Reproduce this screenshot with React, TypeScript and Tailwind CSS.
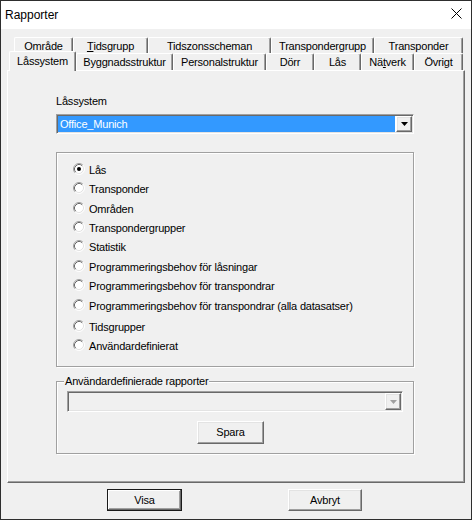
import React from "react";

const raised =
  "border border-t-white border-l-white border-r-[#696969] border-b-[#696969] shadow-[inset_-1px_-1px_0_#a0a0a0,inset_1px_1px_0_#e3e3e3] bg-[#f0f0f0]";
const sunken =
  "border border-t-[#a0a0a0] border-l-[#a0a0a0] border-r-white border-b-white shadow-[inset_1px_1px_0_#696969,inset_-1px_-1px_0_#e3e3e3] p-[1px]";

function Radio({ checked }: { checked?: boolean }) {
  return (
    <svg width="12" height="12" viewBox="0 0 12 12" className="shrink-0 mt-[3px]">
      <circle cx="6" cy="6" r="5" fill="#ffffff" />
      <path d="M2.11 9.89 A5.5 5.5 0 0 1 9.89 2.11" stroke="#a0a0a0" fill="none" />
      <path d="M2.82 9.18 A4.5 4.5 0 0 1 9.18 2.82" stroke="#696969" fill="none" />
      <path d="M9.89 2.11 A5.5 5.5 0 0 1 2.11 9.89" stroke="#ffffff" fill="none" />
      <path d="M9.18 2.82 A4.5 4.5 0 0 1 2.82 9.18" stroke="#e3e3e3" fill="none" />
      {checked && <circle cx="6" cy="6" r="2" fill="#000000" />}
    </svg>
  );
}

function Arrow({ color }: { color: string }) {
  return (
    <svg width="7" height="4" viewBox="0 0 7 4">
      <polygon points="0,0 7,0 3.5,4" fill={color} />
    </svg>
  );
}

type Tab = { label: React.ReactNode; w: number; selected?: boolean };

const row1: Tab[] = [
  { label: "Område", w: 59 },
  {
    label: (
      <>
        <span className="underline underline-offset-1">T</span>idsgrupp
      </>
    ),
    w: 75,
  },
  { label: "Tidszonsscheman", w: 123 },
  { label: "Transpondergrupp", w: 103 },
  { label: "Transponder", w: 89 },
];

const row2: Tab[] = [
  { label: "Låssystem", w: 67, selected: true },
  { label: "Byggnadsstruktur", w: 97 },
  { label: "Personalstruktur", w: 93 },
  { label: "Dörr", w: 48 },
  { label: "Lås", w: 47 },
  {
    label: (
      <>
        Nä<span className="underline underline-offset-1">t</span>verk
      </>
    ),
    w: 53,
  },
  { label: "Övrigt", w: 49 },
];

const radios: { label: string; h: number; checked?: boolean }[] = [
  { label: "Lås", h: 19, checked: true },
  { label: "Transponder", h: 20 },
  { label: "Områden", h: 19 },
  { label: "Transpondergrupper", h: 19 },
  { label: "Statistik", h: 20 },
  { label: "Programmeringsbehov för låsningar", h: 19 },
  { label: "Programmeringsbehov för transpondrar", h: 20 },
  { label: "Programmeringsbehov för transpondrar (alla datasatser)", h: 21 },
  { label: "Tidsgrupper", h: 19 },
  { label: "Användardefinierat", h: 20 },
];

export default function App() {
  return (
    <div className="w-[472px] h-[520px] border border-[#2e2e2e] bg-[#f0f0f0] flex flex-col overflow-hidden font-['Liberation_Sans',Arial,sans-serif] text-[11px] tracking-[-0.2px] text-black">
      {/* Title bar */}
      <div className="h-[28px] bg-white flex items-center justify-between pl-[4px] pr-[9px] shrink-0">
        <span className="text-[12px] tracking-normal leading-[16px]">Rapporter</span>
        <svg width="11" height="11" viewBox="0 0 11 11" className="mt-[-4px]">
          <path d="M0.5 0.5 L10.5 10.5 M10.5 0.5 L0.5 10.5" stroke="#000" strokeWidth="1" />
        </svg>
      </div>

      {/* Body */}
      <div className="flex flex-col px-[6px]">
        {/* Tab row 1 */}
        <div className="flex mt-[8px] ml-[7px] h-[16px]">
          {row1.map((t, i) => (
            <div
              key={i}
              style={{ width: t.w }}
              className="h-[16px] flex items-center justify-center border-l border-t border-l-white border-t-white border-r border-r-[#696969] shadow-[inset_-1px_0_0_#a0a0a0] leading-[13px] pt-[1px] rounded-tl-[2px] rounded-tr-[2px]"
            >
              {t.label}
            </div>
          ))}
        </div>
        {/* Tab row 2 */}
        <div className="flex items-end ml-[2px] h-[17px] relative z-10">
          {row2.map((t, i) => (
            <div
              key={i}
              style={{ width: t.w }}
              className={
                t.selected
                  ? "h-[20px] mb-[-1px] bg-[#f0f0f0] flex items-start justify-center pt-[3px] border-l border-t border-l-white border-t-white border-r border-r-[#696969] shadow-[inset_-1px_0_0_#a0a0a0] leading-[13px] rounded-tl-[2px] rounded-tr-[2px]"
                  : "h-[17px] flex items-center justify-center border-l border-t border-l-white border-t-white border-r border-r-[#696969] shadow-[inset_-1px_0_0_#a0a0a0] leading-[13px] rounded-tl-[2px] rounded-tr-[2px]"
              }
            >
              {t.label}
            </div>
          ))}
        </div>

        {/* Panel */}
        <div className="h-[413px] border border-t-white border-l-white border-r-[#696969] border-b-[#696969] shadow-[inset_-1px_-1px_0_#a0a0a0] pl-[48px] pt-[24px] flex flex-col">
          <div className="leading-[13px]">Låssystem</div>
          <div className={`mt-[6px] w-[358px] h-[20px] flex bg-white ${sunken}`}>
            <div className="flex-1 bg-[#3399ff] text-white leading-[16px] pl-[2px] mr-[1px]">Office_Munich</div>
            <div className={`w-[16px] h-[16px] flex items-center justify-center ${raised}`}>
              <Arrow color="#000" />
            </div>
          </div>

          {/* Radio group */}
          <div className="mt-[18px] w-[358px] h-[215px] border border-[#a0a0a0] shadow-[1px_1px_0_#ffffff,inset_1px_1px_0_#ffffff] pt-[7px] pl-[16px] flex flex-col">
            {radios.map((r, i) => (
              <div key={i} style={{ height: r.h }} className="flex items-start gap-[4px] shrink-0">
                <Radio checked={r.checked} />
                <span className="leading-[20px]">{r.label}</span>
              </div>
            ))}
          </div>

          {/* User-defined reports group */}
          <div className="relative mt-[14px] w-[358px] h-[73px] border border-[#a0a0a0] shadow-[1px_1px_0_#ffffff,inset_1px_1px_0_#ffffff] flex flex-col">
            <span className="absolute left-[7px] top-[-7px] px-[1px] bg-[#f0f0f0] leading-[13px]">
              Användardefinierade rapporter
            </span>
            <div className={`mt-[9px] mx-[10px] h-[21px] flex bg-[#f0f0f0] ${sunken}`}>
              <div className="flex-1" />
              <div className={`w-[16px] h-[17px] flex items-center justify-center ${raised}`}>
                <Arrow color="#a0a0a0" />
              </div>
            </div>
            <div className={`mt-[9px] ml-[140px] w-[67px] h-[23px] flex items-center justify-center ${raised}`}>
              Spara
            </div>
          </div>
        </div>

        {/* Bottom buttons */}
        <div className="flex mt-[6px]">
          <div className="ml-[100px] w-[75px] h-[22px] flex items-center justify-center border border-[#1a1a1a] bg-[#f0f0f0] shadow-[inset_-1px_-1px_0_#696969,inset_1px_1px_0_#ffffff,inset_-2px_-2px_0_#a0a0a0]">
            Visa
          </div>
          <div className={`ml-[106px] w-[74px] h-[22px] flex items-center justify-center ${raised}`}>
            Avbryt
          </div>
        </div>
      </div>
    </div>
  );
}
